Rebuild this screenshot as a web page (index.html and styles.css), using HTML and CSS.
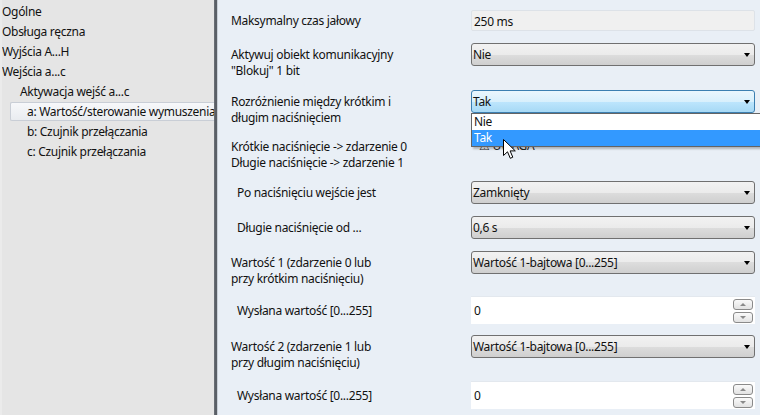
FILE: index.html
```html
<!DOCTYPE html>
<html>
<head>
<meta charset="utf-8">
<link rel="stylesheet" href="styles.css">
</head>
<body>
<div class="app">
  <div class="tree">
    <div class="node l0">Ogólne</div>
    <div class="node l0">Obsługa ręczna</div>
    <div class="node l0">Wyjścia A...H</div>
    <div class="node l0">Wejścia a...c</div>
    <div class="node l1">Aktywacja wejść a...c</div>
    <div class="node l2 selected">a: Wartość/sterowanie wymuszenia</div>
    <div class="node l2">b: Czujnik przełączania</div>
    <div class="node l2">c: Czujnik przełączania</div>
  </div>
  <div class="splitter"></div>
  <div class="params">
    <div class="row">
      <div class="label p-field">Maksymalny czas jałowy</div>
      <div class="ctrl"><div class="field">250 ms</div></div>
    </div>
    <div class="row mt12">
      <div class="label p-combo">Aktywuj obiekt komunikacyjny<br>"Blokuj" 1 bit</div>
      <div class="ctrl"><div class="combo"><span class="val">Nie</span><span class="arrow"></span></div></div>
    </div>
    <div class="row mt11">
      <div class="label p-combo">Rozróżnienie między krótkim i<br>długim naciśnięciem</div>
      <div class="ctrl">
        <div class="combo active"><span class="val">Tak</span><span class="arrow"></span>
          <div class="droplist">
            <div class="opt">Nie</div>
            <div class="opt hl">Tak</div>
          </div>
          <svg class="cursor" width="14" height="22" viewBox="0 0 14 22"><path d="M0.5 0.5 L0.5 16.5 L4.5 12.8 L7.3 19.3 L9.8 18.2 L7.1 11.9 L12.3 11.9 Z" fill="#fff" stroke="#000" stroke-width="1"/></svg>
        </div>
      </div>
    </div>
    <div class="row mt13">
      <div class="label">Krótkie naciśnięcie -&gt; zdarzenie 0<br>Długie naciśnięcie -&gt; zdarzenie 1</div>
      <div class="ctrl"><div class="note"><span class="warn">⚠</span> UWAGA</div></div>
    </div>
    <div class="row mt10">
      <div class="label p-combo sub">Po naciśnięciu wejście jest</div>
      <div class="ctrl"><div class="combo"><span class="val">Zamknięty</span><span class="arrow"></span></div></div>
    </div>
    <div class="row mt12">
      <div class="label p-combo sub">Długie naciśnięcie od ...</div>
      <div class="ctrl"><div class="combo"><span class="val">0,6 s</span><span class="arrow"></span></div></div>
    </div>
    <div class="row mt12">
      <div class="label p-combo">Wartość 1 (zdarzenie 0 lub<br>przy krótkim naciśnięciu)</div>
      <div class="ctrl"><div class="combo"><span class="val">Wartość 1-bajtowa [0...255]</span><span class="arrow"></span></div></div>
    </div>
    <div class="row mt9">
      <div class="label p-input sub">Wysłana wartość [0...255]</div>
      <div class="ctrl"><div class="input"><span class="val">0</span><div class="spin"><span class="sbtn up"></span><span class="sbtn down"></span></div></div></div>
    </div>
    <div class="row mt11">
      <div class="label p-combo">Wartość 2 (zdarzenie 1 lub<br>przy długim naciśnięciu)</div>
      <div class="ctrl"><div class="combo"><span class="val">Wartość 1-bajtowa [0...255]</span><span class="arrow"></span></div></div>
    </div>
    <div class="row mt10">
      <div class="label p-input sub">Wysłana wartość [0...255]</div>
      <div class="ctrl"><div class="input"><span class="val">0</span><div class="spin"><span class="sbtn up"></span><span class="sbtn down"></span></div></div></div>
    </div>
  </div>
</div>
</body>
</html>
```
FILE: styles.css
```css
html, body {
  margin: 0;
  padding: 0;
}
body {
  font-family: "Noto Sans", "Open Sans", sans-serif;
  font-size: 12px;
  letter-spacing: -0.3px;
  color: #111;
  width: 760px;
  height: 415px;
  overflow: hidden;
}
.app {
  display: flex;
  height: 415px;
}
.tree {
  width: 214px;
  flex: none;
  background: #e5e5e5;
  padding-top: 2px;
  box-sizing: border-box;
  border-left: 2px solid #ebebeb;
}
.node {
  height: 20px;
  line-height: 20px;
  white-space: nowrap;
  overflow: hidden;
}
.l0 { padding-left: 0; }
.l1 { padding-left: 18px; }
.l2 { padding-left: 25px; }
.node.selected {
  margin-left: 8px;
  padding-left: 16px;
  height: 19px;
  line-height: 18px;
  box-sizing: border-box;
  border: 1px solid #c9ced6;
  border-right: none;
  border-radius: 2px 0 0 2px;
  background: linear-gradient(#f7f8fa, #e9ecf0);
  margin-bottom: 1px;
}
.splitter {
  width: 4px;
  flex: none;
  background: linear-gradient(90deg, #777c83 0, #5a5f66 1px, #5a5f66 3px, #c9d0d8 3px);
}
.params {
  flex: 1;
  background: #e9eff6;
  padding: 10px 5px 0 13px;
  display: flex;
  flex-direction: column;
}
.row {
  display: flex;
  align-items: flex-start;
}
.mt9 { margin-top: 9px; }
.mt10 { margin-top: 10px; }
.mt11 { margin-top: 11px; }
.mt12 { margin-top: 12px; }
.mt13 { margin-top: 13px; }
.label {
  width: 240px;
  flex: none;
  line-height: 16px;
  white-space: nowrap;
}
.label.sub { padding-left: 6px; box-sizing: border-box; }
.p-field { padding-top: 3px; }
.p-combo { padding-top: 4px; }
.p-input { padding-top: 7px; }
.ctrl {
  width: 284px;
  flex: none;
}
.field {
  height: 21px;
  line-height: 21px;
  box-sizing: border-box;
  border: 1px solid #dde2e8;
  border-radius: 2px;
  background: #f0f0f0;
  padding-left: 2px;
}
.combo {
  position: relative;
  height: 23px;
  box-sizing: border-box;
  border: 1px solid #707070;
  border-radius: 3px;
  background: linear-gradient(#f2f2f2 0, #ebebeb 50%, #dddddd 50%, #cfcfcf 100%);
  display: flex;
  align-items: center;
  padding: 0 4px 0 1px;
}
.combo.active {
  border-color: #3c7fb1;
  background: linear-gradient(#eaf6fd 0, #d9f0fc 50%, #bee6fd 50%, #a7d9f5 100%);
}
.combo .val {
  flex: 1;
  white-space: nowrap;
}
.arrow {
  width: 0;
  height: 0;
  border-left: 3.5px solid transparent;
  border-right: 3.5px solid transparent;
  border-top: 4px solid #000;
  margin-top: 1px;
}
.droplist {
  position: absolute;
  top: 22px;
  left: -1px;
  width: 288px;
  background: #fff;
  border: 1px solid #646464;
  box-shadow: 2px 2px 2px rgba(0,0,0,0.25);
  z-index: 5;
}
.opt {
  height: 16px;
  line-height: 16px;
  padding-left: 2px;
}
.opt.hl {
  background: #3399ff;
  color: #fff;
}
.cursor {
  position: absolute;
  left: 31px;
  top: 48px;
  z-index: 6;
}
.note {
  margin-top: -1px;
  padding-left: 8px;
  line-height: 16px;
  color: #222;
}
.input {
  height: 28px;
  box-sizing: border-box;
  background: #fff;
  border-top: 1px solid #e3e8ee;
  display: flex;
  align-items: center;
  padding-left: 3px;
}
.input .val { flex: 1; }
.spin {
  display: flex;
  flex-direction: column;
  gap: 2px;
  margin-right: 2px;
}
.sbtn {
  width: 20px;
  height: 11px;
  box-sizing: border-box;
  border: 1px solid #8a8a8a;
  border-radius: 3px;
  background: linear-gradient(#fafafa, #e2e2e2);
  display: flex;
  align-items: center;
  justify-content: center;
}
.sbtn::after {
  content: "";
  width: 0;
  height: 0;
  border-left: 3px solid transparent;
  border-right: 3px solid transparent;
}
.sbtn.up::after { border-bottom: 3px solid #8a8a8a; }
.sbtn.down::after { border-top: 3px solid #8a8a8a; }
```
